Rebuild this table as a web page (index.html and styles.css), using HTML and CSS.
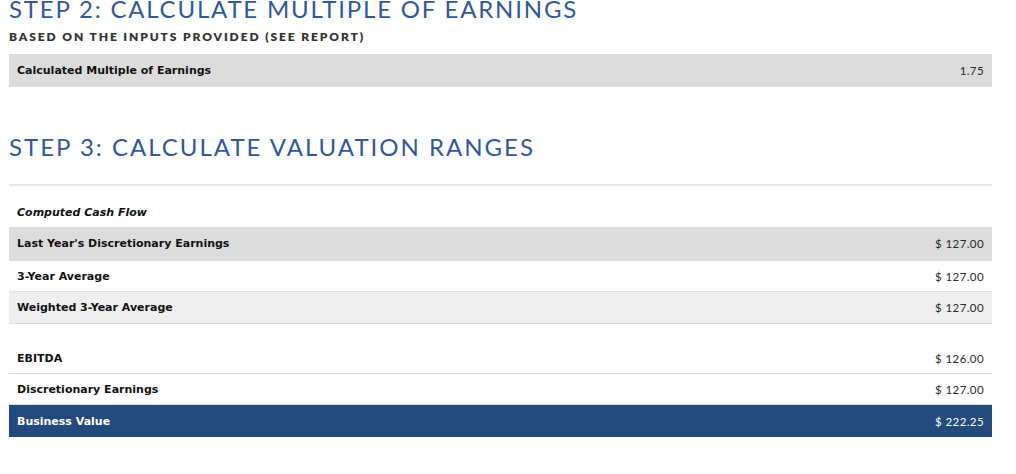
FILE: index.html
```html
<!DOCTYPE html>
<html>
<head>
<meta charset="utf-8">
<link rel="stylesheet" href="styles.css">
</head>
<body>
<div class="page">
  <section class="step step-2">
    <h1 class="step-title">STEP 2: CALCULATE MULTIPLE OF EARNINGS</h1>
    <h2 class="step-sub">BASED ON THE INPUTS PROVIDED (SEE REPORT)</h2>
    <div class="row row-gray row-multiple">
      <span class="label">Calculated Multiple of Earnings</span>
      <span class="value">1.75</span>
    </div>
  </section>

  <section class="step step-3">
    <h1 class="step-title">STEP 3: CALCULATE VALUATION RANGES</h1>
    <div class="divider"></div>
    <div class="caption">Computed Cash Flow</div>
    <div class="row row-gray row-first">
      <span class="label">Last Year's Discretionary Earnings</span>
      <span class="value">$ 127.00</span>
    </div>
    <div class="row row-white">
      <span class="label">3-Year Average</span>
      <span class="value">$ 127.00</span>
    </div>
    <div class="row row-light">
      <span class="label">Weighted 3-Year Average</span>
      <span class="value">$ 127.00</span>
    </div>
    <div class="spacer"></div>
    <div class="row row-white">
      <span class="label">EBITDA</span>
      <span class="value">$ 126.00</span>
    </div>
    <div class="row row-white">
      <span class="label">Discretionary Earnings</span>
      <span class="value">$ 127.00</span>
    </div>
    <div class="row row-total">
      <span class="label">Business Value</span>
      <span class="value">$ 222.25</span>
    </div>
  </section>
</div>
</body>
</html>
```
FILE: styles.css
```css
html, body {
  margin: 0;
  padding: 0;
  background: #ffffff;
}

.page {
  width: 983px;
  margin-left: 9px;
  font-family: "Lato", "Liberation Sans", sans-serif;
}

.step-title {
  margin: 0;
  font-family: "Lato", sans-serif;
  font-weight: 400;
  font-size: 24px;
  line-height: 18px;
  letter-spacing: 1.8px;
  color: #30599a;
  white-space: nowrap;
}

.step-3 .step-title {
  letter-spacing: 2px;
}

.step-sub {
  margin: 12px 0 0 0;
  font-family: "Lato", sans-serif;
  font-weight: 800;
  font-size: 12px;
  line-height: 14px;
  letter-spacing: 1.9px;
  color: #333333;
}

.row {
  display: flex;
  justify-content: space-between;
  align-items: center;
  height: 30px;
  padding: 0 8px;
  border-bottom: 1px solid #dedede;
}

.label {
  font-family: "DejaVu Sans", sans-serif;
  font-weight: 700;
  font-size: 11px;
  letter-spacing: 0;
  color: #111111;
}

.value {
  font-family: "Lato", sans-serif;
  font-size: 11.5px;
  letter-spacing: 0.4px;
  color: #2a2a2a;
}

.row-gray {
  background: #dcdcdc;
  border-bottom-color: #dcdcdc;
}

.row-multiple {
  margin-top: 10px;
  height: 32px;
}

.row-first {
  height: 33px;
}

.row-white {
  background: #ffffff;
}

.row-light {
  height: 31px;
  background: #efefef;
}

.row-total {
  height: 32px;
  background: #234a7c;
  border-bottom: none;
}

.row-total .label,
.row-total .value {
  color: #ffffff;
}

.step-3 {
  margin-top: 51px;
}

.divider {
  margin-top: 28px;
  height: 2px;
  background: #e8e8e8;
}

.caption {
  height: 41px;
  box-sizing: border-box;
  padding: 0 0 8px 8px;
  display: flex;
  align-items: flex-end;
  font-family: "DejaVu Sans", sans-serif;
  font-weight: 700;
  font-style: italic;
  font-size: 11px;
  line-height: 13px;
  color: #111111;
}

.spacer {
  height: 19px;
}
```
